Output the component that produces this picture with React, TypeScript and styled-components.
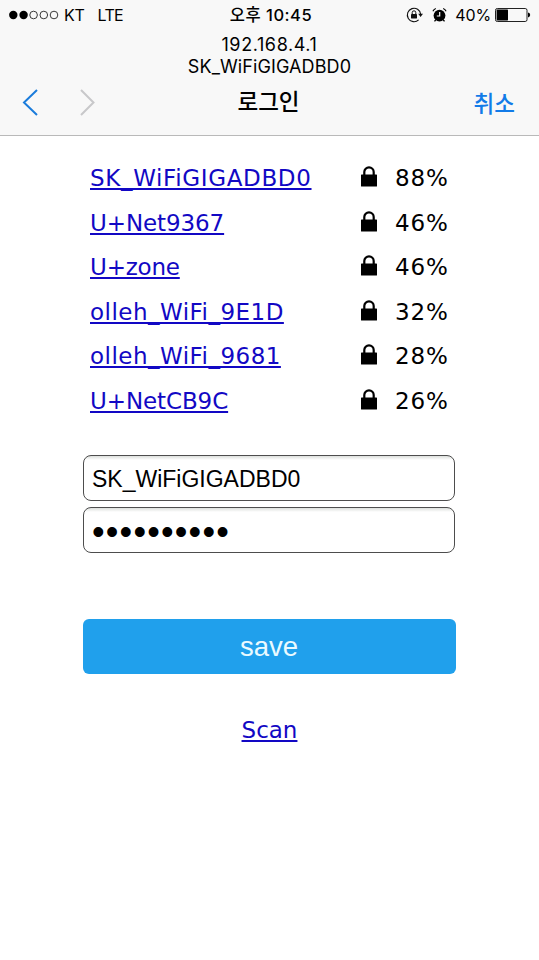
import { useState } from "react";
import styled, { createGlobalStyle } from "styled-components";

const GlobalStyle = createGlobalStyle`
  * {
    box-sizing: border-box;
  }
  body {
    margin: 0;
    background: #fff;
  }
`;

const StyledScreen = styled.div`
  width: 539px;
  min-height: 960px;
  background: #fff;
  color: #000;
`;

const StyledHeader = styled.header`
  height: 136px;
  background: #f8f8f8;
  border-bottom: 1px solid #b9b9b9;
  font-family: Inter, "Noto Sans CJK KR", sans-serif;
`;

const StyledStatusBar = styled.div`
  display: grid;
  grid-template-columns: 1fr auto 1fr;
  align-items: center;
  height: 30px;
  padding: 0 8px 0 9px;
  font-size: 16px;
  line-height: 30px;
`;

const StyledCarrier = styled.div`
  display: flex;
  align-items: center;
  letter-spacing: -0.3px;
`;

const StyledSignal = styled.svg`
  margin-right: 5px;
`;

const StyledNetwork = styled.span`
  margin-left: 13px;
  letter-spacing: -0.6px;
`;

const StyledTime = styled.div`
  padding-left: 2px;
  font-size: 16.5px;
  font-weight: 550;
  letter-spacing: 0.5px;
`;

const StyledIndicators = styled.div`
  display: flex;
  align-items: center;
  justify-content: flex-end;
  gap: 8px;
`;

const StyledBatteryLevel = styled.span`
  margin-right: -4px;
  letter-spacing: -0.1px;
`;

const StyledAddress = styled.div`
  padding-top: 4px;
  font-size: 18px;
  line-height: 22px;
  text-align: center;
`;

const StyledIp = styled.div`
  letter-spacing: 0.6px;
`;

const StyledNetworkName = styled.div`
  letter-spacing: 0.1px;
`;

const StyledNav = styled.nav`
  display: grid;
  grid-template-columns: 1fr auto 1fr;
  align-items: center;
  height: 48px;
  padding: 0 24px 0 22px;
`;

const StyledArrows = styled.div`
  display: flex;
  gap: 40px;
`;

const StyledTitle = styled.h1`
  margin: 0;
  font-size: 22.5px;
  font-weight: 500;
  line-height: 30px;
`;

const StyledCancel = styled.button`
  justify-self: end;
  padding: 0;
  border: 0;
  background: none;
  color: #127be8;
  font: 500 22.5px/30px "Noto Sans CJK KR", sans-serif;
`;

const StyledMain = styled.main`
  width: 373px;
  margin: 0 auto;
  padding-top: 20px;
  font-family: "DejaVu Sans", sans-serif;
  font-size: 23px;
`;

const StyledRow = styled.div`
  display: flex;
  align-items: center;
  height: 44.5px;
  padding: 0 7px;
`;

const StyledLink = styled.a<{ $tracking?: number }>`
  color: #1208c4;
  letter-spacing: ${(p) => p.$tracking ?? 0}px;
  text-decoration: underline;
  text-decoration-thickness: 1.5px;
  text-underline-offset: 1.5px;
`;

const StyledLock = styled.svg`
  margin: 0 0 3px auto;
`;

const StyledQuality = styled.span`
  width: 54px;
  margin-left: 17px;
  letter-spacing: 0.9px;
`;

const StyledForm = styled.form`
  display: flex;
  flex-direction: column;
  padding-top: 32px;
`;

const StyledInput = styled.input`
  width: 372px;
  height: 46px;
  margin-bottom: 6px;
  padding: 3px 8px 0;
  border: 1.5px solid #4d4d4d;
  border-radius: 8px;
  outline: none;
  background: linear-gradient(#dcdfdc, #fff 4px);
  color: #000;
  font-family: "Liberation Sans", sans-serif;
  font-size: 23px;

  &[type="password"] {
    font-size: 36px;
    letter-spacing: 1.2px;
  }
`;

const StyledButton = styled.button`
  height: 55px;
  margin-top: 60px;
  padding-right: 7px;
  border: 0;
  border-radius: 6px;
  background: #20a0ec;
  color: #eafaff;
  font-family: "Liberation Sans", sans-serif;
  font-size: 27.5px;
`;

const StyledFooter = styled.div`
  margin-top: 43px;
  text-align: center;
`;

const networks = [
  { ssid: "SK_WiFiGIGADBD0", quality: 88, tracking: 0.65 },
  { ssid: "U+Net9367", quality: 46, tracking: -0.1 },
  { ssid: "U+zone", quality: 46, tracking: -0.2 },
  { ssid: "olleh_WiFi_9E1D", quality: 32, tracking: 0.48 },
  { ssid: "olleh_WiFi_9681", quality: 28, tracking: 0.48 },
  { ssid: "U+NetCB9C", quality: 26, tracking: -0.1 },
];

function Signal() {
  return (
    <StyledSignal width="50" height="10" viewBox="0 0 50 10">
      {[4.3, 14.6, 24.6, 34.8, 45].map((x, i) => (
        <circle key={x} cx={x} cy="5" r={i < 2 ? 4.2 : 3.8} fill={i < 2 ? "#000" : "none"} stroke={i < 2 ? "none" : "#222"} strokeWidth="0.9" />
      ))}
    </StyledSignal>
  );
}

function RotationLock() {
  return (
    <svg width="18" height="16" viewBox="0 0 18 16" fill="none" stroke="#111">
      <path d="M12.6 12.9A6.7 6.7 0 1 1 14.7 7.2" strokeWidth="1.1" />
      <path d="M12.2 6.8h4.8l-2.4 3.2z" fill="#111" stroke="none" />
      <rect x="5" y="7" width="6" height="4.4" rx="0.4" fill="#111" stroke="none" />
      <path d="M6.2 7.3V5.6a1.8 1.8 0 0 1 3.6 0v1.7" strokeWidth="1" />
    </svg>
  );
}

function Alarm() {
  return (
    <svg width="15" height="16" viewBox="0 0 15 16" fill="none" stroke="#000">
      <circle cx="7.5" cy="8.6" r="5.9" fill="#000" stroke="none" />
      <path d="M0.9 4.3A5 5 0 0 1 3.8 1.5M11.2 1.5a5 5 0 0 1 2.9 2.8" strokeWidth="1.1" />
      <path d="M3.7 12.8l-1.2 1.6M11.3 12.8l1.2 1.6" strokeWidth="1.3" />
      <path d="M7.7 5v4H4.8" stroke="#f8f8f8" strokeWidth="1.2" />
    </svg>
  );
}

function Battery() {
  return (
    <svg width="36" height="14" viewBox="0 0 36 14">
      <rect x="0.5" y="0.5" width="31.5" height="13" rx="1.8" fill="none" stroke="#222" />
      <rect x="1.6" y="1.6" width="11.4" height="10.8" rx="0.6" />
      <path d="M33 4.6q2.2 0.5 2.2 2.4T33 9.4z" />
    </svg>
  );
}

function Chevron({ forward }: { forward?: boolean }) {
  return (
    <svg width="17" height="27" viewBox="0 0 17 27" fill="none" stroke={forward ? "#c8c8ca" : "#1b7cdb"} strokeWidth="2">
      <path d={forward ? "M2 1l12.5 12.5L2 26" : "M15 1L2 13.5L15 26"} />
    </svg>
  );
}

function Lock() {
  return (
    <StyledLock width="18" height="21" viewBox="0 0 18 21">
      <rect x="1" y="8.5" width="16" height="12" rx="0.6" />
      <path d="M4.3 10V6a4.7 4.7 0 0 1 9.4 0V10" fill="none" stroke="#000" strokeWidth="2.2" />
    </StyledLock>
  );
}

export default function App() {
  const [ssid, setSsid] = useState("SK_WiFiGIGADBD0");
  const [password, setPassword] = useState("0123456789");

  return (
    <StyledScreen>
      <GlobalStyle />
      <StyledHeader>
        <StyledStatusBar>
          <StyledCarrier>
            <Signal />
            KT
            <StyledNetwork>LTE</StyledNetwork>
          </StyledCarrier>
          <StyledTime>오후 10:45</StyledTime>
          <StyledIndicators>
            <RotationLock />
            <Alarm />
            <StyledBatteryLevel>40%</StyledBatteryLevel>
            <Battery />
          </StyledIndicators>
        </StyledStatusBar>
        <StyledAddress>
          <StyledIp>192.168.4.1</StyledIp>
          <StyledNetworkName>SK_WiFiGIGADBD0</StyledNetworkName>
        </StyledAddress>
        <StyledNav>
          <StyledArrows>
            <Chevron />
            <Chevron forward />
          </StyledArrows>
          <StyledTitle>로그인</StyledTitle>
          <StyledCancel>취소</StyledCancel>
        </StyledNav>
      </StyledHeader>

      <StyledMain>
        {networks.map((n) => (
          <StyledRow key={n.ssid}>
            <StyledLink href="#p" $tracking={n.tracking} onClick={() => setSsid(n.ssid)}>
              {n.ssid}
            </StyledLink>
            <Lock />
            <StyledQuality>{n.quality}%</StyledQuality>
          </StyledRow>
        ))}
        <StyledForm onSubmit={(e) => e.preventDefault()}>
          <StyledInput value={ssid} onChange={(e) => setSsid(e.target.value)} />
          <StyledInput
            type="password"
            value={password}
            onChange={(e) => setPassword(e.target.value)}
          />
          <StyledButton type="submit">save</StyledButton>
        </StyledForm>
        <StyledFooter>
          <StyledLink href="#scan">Scan</StyledLink>
        </StyledFooter>
      </StyledMain>
    </StyledScreen>
  );
}
